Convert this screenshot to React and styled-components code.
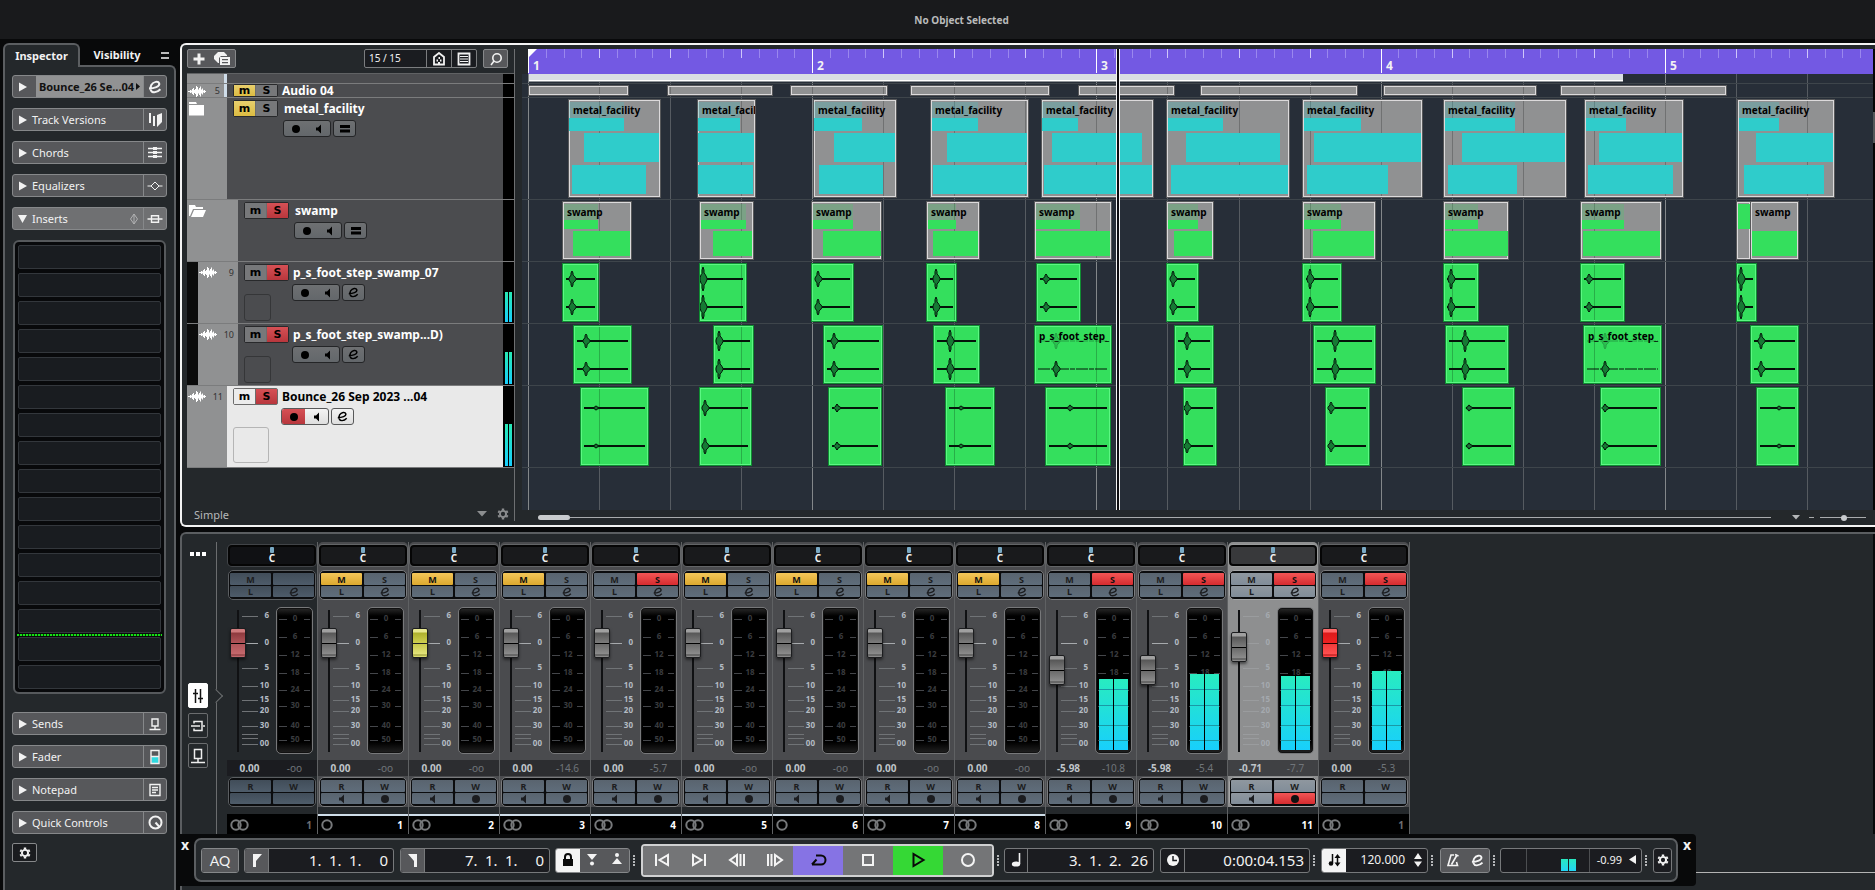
import React from "react";
import styled, { createGlobalStyle, css } from "styled-components";

const c = {
  panel: "#24282b",
  line: "#5b5e61",
  track: "#4b4c4f",
  gutter: "#909192",
  slate: "#272e38",
  cyan: "#2fcccb",
  green: "#34df5d",
  purple: "#7359e3",
  blue: "#cfdde9",
};

const Global = createGlobalStyle`
  * { box-sizing: border-box; }
  body { margin: 0; background: #08090a; overflow: hidden; }
  body, button, input { font-family: "Noto Sans", "Open Sans", sans-serif; font-size: 11px; }
  button { padding: 0; margin: 0; border: 0; color: inherit; background: none; }
  svg { display: block; flex: none; }
`;

/* ---------- icons ---------- */

const Svg = ({ w = 16, h = 16, children, ...rest }) => (
  <svg width={w} height={h} viewBox={`0 0 ${w} ${h}`} fill="none" stroke="currentColor" aria-hidden="true" {...rest}>
    {children}
  </svg>
);

const EditIcon = ({ size = 14, weight = 2 }) => (
  <svg width={size} height={size} viewBox="0 0 14 14" fill="none" stroke="currentColor" strokeWidth={weight} aria-hidden="true">
    <path d="M1 8.5C6 8.5 12.2 6.5 11.2 3.4C10.4 1 5.5 1.2 3.3 5C1.4 8.6 2.8 12.4 6.4 12.3C8.8 12.2 10.8 11 12.4 9.3" />
  </svg>
);
const VersionsIcon = () => (
  <Svg fill="currentColor" stroke="none">
    <path d="M2 1h2v10H2zM6 4h2v10H6zM10 3l5-2v9l-5 5z" />
  </Svg>
);
const ChordsIcon = () => (
  <Svg strokeWidth="1.6">
    <path d="M1 3.5h14M1 7.5h14M1 11.5h14" />
    <path d="M8 2v3M8 6v3M8 10v3" strokeWidth="4" />
  </Svg>
);
const EqIcon = () => (
  <Svg>
    <path d="M0.500 8h3.500M12 8h3.500M8 4l4 4l-4 4l-4-4z" />
  </Svg>
);
const InsertIcon = () => (
  <Svg strokeWidth="1.400">
    <path d="M0.500 8h15M4.500 4.700h7v6.600h-7z" />
  </Svg>
);
const BypassIcon = () => (
  <Svg w={10} h={12} opacity="0.500">
    <path d="M5 1l3.500 5L5 11L1.500 6zM5 1v10" />
  </Svg>
);
const SendIcon = () => (
  <Svg strokeWidth="1.400">
    <path d="M2.500 13.500h11M8 13v-3M5 3h6v7H5z" />
  </Svg>
);
const FaderIcon = () => (
  <Svg>
    <path d="M4.500 8h7v6h-7z" fill="#2fd9e0" stroke="none" />
    <path d="M4 1.500h8v13H4zM4 7.500h8" strokeWidth="1.400" />
  </Svg>
);
const NoteIcon = () => (
  <Svg strokeWidth="1.400">
    <path d="M3 2.500h10v11H3zM5 5.500h6M5 8h6M5 10.500h4" />
  </Svg>
);
const KnobIcon = () => (
  <Svg strokeWidth="2">
    <circle cx="8.500" cy="7.500" r="6" />
    <path d="M8.500 7.500l4 4.500" />
  </Svg>
);
const GearIcon = ({ size = 14 }) => (
  <svg width={size} height={size} viewBox="0 0 14 14" fill="none" stroke="currentColor" aria-hidden="true">
    <circle cx="7" cy="7" r="3.600" strokeWidth="2.200" />
    <path d="M7 0.500v2M7 11.500v2M1.400 3.800l1.700 1M10.900 9.200l1.700 1M1.400 10.200l1.700-1M10.900 4.800l1.700-1" strokeWidth="2.800" />
  </svg>
);
const Tri = ({ open }) => (
  <Svg w={10} h={10} fill="currentColor" stroke="none">
    <path d={open ? "M0 1h9L4.500 9z" : "M1 0.500v9L9 5z"} />
  </Svg>
);
const WAVE_BARS = [1, 1, 3, 2, 5, 7, 3, 5, 11, 9, 4, 7, 10, 4, 6, 2, 3, 1];
const WaveIcon = () => (
  <Svg w={18} h={13}>
    <path d={WAVE_BARS.map((b, i) => `M${i + 0.5} ${6.5 - b / 2}v${b}`).join("")} />
    <path d="M1 6.500h16" />
  </Svg>
);
const FolderIcon = ({ open }) => (
  <Svg w={18} h={14} fill="currentColor" stroke="none">
    {open ? (
      <path d="M1 1h6l1 2h7v2H5L2 12H1zM6 6h12l-3 7H3z" />
    ) : (
      <path d="M1 0h7l1 2H1zM1 3h15v10.500H1z" />
    )}
  </Svg>
);
const SpeakerIcon = () => (
  <Svg w={8} h={10} fill="currentColor" stroke="none">
    <path d="M1 3.500h2l3-3v9l-3-3H1z" />
  </Svg>
);
const DotIcon = () => (
  <Svg w={10} h={10} fill="currentColor" stroke="none">
    <circle cx="5" cy="5" r="4" />
  </Svg>
);
const LanesIcon = () => (
  <Svg w={10} h={8} strokeWidth="3">
    <path d="M0 1.500h10M0 6h10" />
  </Svg>
);

/* ---------- shell ---------- */

const Page = styled.div`
  height: 100vh;
  display: flex;
  flex-direction: column;
  color: #f2f2f2;
`;
const InfoLine = styled.header`
  flex: none;
  height: 39px;
  padding-left: 48px;
  background: #191a1c;
  color: #b9babb;
  display: flex;
  align-items: center;
  justify-content: center;
  font-weight: bold;
  font-size: 10px;
`;
const Main = styled.div`
  flex: 1;
  min-height: 0;
  display: flex;
  gap: 4px;
  padding: 4px 0 0 3px;
`;
const Center = styled.main`
  flex: 1;
  min-width: 0;
  display: flex;
  flex-direction: column;
  gap: 5px;
`;

/* ---------- inspector ---------- */

const Inspector = styled.aside`
  flex: none;
  width: 173px;
  display: flex;
  flex-direction: column;
`;
const TabRow = styled.div`
  display: flex;
  height: 22px;
  font-weight: bold;
`;
const Tab = styled.button`
  width: ${(p) => (p.$active ? 77 : 74)}px;
  height: 24px;
  font-weight: bold;
  line-height: 20px;
  position: relative;
  ${(p) =>
    p.$active &&
    css`
      background: ${c.panel};
      border: 2px solid ${c.line};
      border-bottom: 0;
      border-radius: 6px 6px 0 0;
    `}
`;
const TabMenu = styled.button`
  width: 8px;
  height: 7px;
  margin: 9px 0 0 7px;
  border-top: 2px solid #bbb;
  border-bottom: 2px solid #bbb;
`;
const InspectorBody = styled.div`
  flex: 1;
  background: ${c.panel};
  border: 2px solid ${c.line};
  border-bottom: 0;
  border-radius: 0 6px 0 0;
  padding: 8px 7px 0;
  display: flex;
  flex-direction: column;
  gap: 10px;
`;
const SectionRow = styled.div`
  flex: none;
  display: flex;
  height: 23px;
  border: 1px solid #86888a;
  border-radius: 3px;
  background: ${(p) => (p.$open ? "#6f7072" : "#57585b")};
`;
const SectionName = styled.button`
  flex: 1;
  display: flex;
  align-items: center;
  gap: 4px;
  padding-left: 5px;
  padding-right: 4px;
  text-align: left;
  svg:last-child:not(:first-child) { margin-left: auto; }
`;
const SectionIcon = styled.button`
  width: 23px;
  border-left: 1px solid #86888a;
  display: grid;
  place-items: center;
`;
const TrackTitle = styled.div`
  flex: 1;
  margin-left: 8px;
  background: #919293;
  color: #111;
  font-weight: bold;
  font-size: 11px;
  white-space: nowrap;
  display: flex;
  align-items: center;
  justify-content: center;
  gap: 2px;
`;
const ArrowCell = styled.button`
  padding-left: 5px;
  display: grid;
  place-items: center;
`;
const InsertRack = styled.div`
  flex: none;
  margin: 0 1px 8px 1px;
  border: 2px solid #56595c;
  border-radius: 6px;
  background: #08090b;
  padding: 3px;
  display: flex;
  flex-direction: column;
  gap: 4px;
`;
const Slot = styled.button`
  height: 24px;
  border: 1px solid #33373c;
  border-radius: 2px;
  background: #191c20;
  position: relative;
  ${(p) =>
    p.$postLine &&
    css`
      &::after {
        content: "";
        position: absolute;
        left: -2px;
        right: -2px;
        bottom: -4px;
        height: 2px;
        background: repeating-linear-gradient(90deg, #16e016 0 2px, #063806 2px 3px);
      }
    `}
`;
const SmallGear = styled.button`
  width: 25px;
  height: 19px;
  margin-top: -1px;
  border: 1px solid #86888a;
  border-radius: 2px;
  background: #1a1c1f;
  display: grid;
  place-items: center;
`;

const Section = ({ name, icon, open }) => (
  <SectionRow $open={open}>
    <SectionName>
      <Tri open={open} />
      {name}
      {open && <BypassIcon />}
    </SectionName>
    <SectionIcon aria-label={`${name} settings`}>{icon}</SectionIcon>
  </SectionRow>
);

const InspectorPanel = () => (
  <Inspector>
    <TabRow>
      <Tab $active>Inspector</Tab>
      <Tab>Visibility</Tab>
      <TabMenu aria-label="Menu" />
    </TabRow>
    <InspectorBody>
      <SectionRow>
        <ArrowCell aria-label="Expand">
          <Tri />
        </ArrowCell>
        <TrackTitle>
          Bounce_26 Se...04
          <Svg w={4} h={8} fill="currentColor" stroke="none">
            <path d="M0 0v7l4-3.500z" />
          </Svg>
        </TrackTitle>
        <SectionIcon aria-label="Edit channel">
          <EditIcon />
        </SectionIcon>
      </SectionRow>
      <Section name="Track Versions" icon={<VersionsIcon />} />
      <Section name="Chords" icon={<ChordsIcon />} />
      <Section name="Equalizers" icon={<EqIcon />} />
      <Section name="Inserts" icon={<InsertIcon />} open />
      <InsertRack>
        {Array.from({ length: 16 }, (_, i) => (
          <Slot key={i} $postLine={i === 13} aria-label={`Insert ${i + 1}`} />
        ))}
      </InsertRack>
      <Section name="Sends" icon={<SendIcon />} />
      <Section name="Fader" icon={<FaderIcon />} />
      <Section name="Notepad" icon={<NoteIcon />} />
      <Section name="Quick Controls" icon={<KnobIcon />} />
      <SmallGear aria-label="Inspector setup">
        <GearIcon size={12} />
      </SmallGear>
    </InspectorBody>
  </Inspector>
);

/* ---------- track list ---------- */

const Project = styled.section`
  flex: none;
  display: flex;
  border: 2px solid #f4f4f4;
  border-right: 0;
  border-radius: 6px 0 0 6px;
  background: ${c.panel};
  padding-top: 4px;
`;
const TrackPane = styled.div`
  flex: none;
  width: 333px;
  padding-left: 5px;
  border-right: 1px solid #6d6f71;
  margin-bottom: 4px;
  display: flex;
  flex-direction: column;
`;
const Toolbar = styled.div`
  display: flex;
  height: 25px;
  align-items: flex-start;
  border-bottom: 1px solid #606264;
  padding-right: 6px;
`;
const AddGroup = styled.div`
  display: flex;
  align-items: center;
  justify-content: space-around;
  width: 49px;
  height: 19px;
  margin-right: auto;
  border: 1px solid #86888a;
  border-radius: 2px;
  background: #57585b;
`;
const Counter = styled.div`
  display: flex;
  height: 19px;
  margin-right: 6px;
  border: 1px solid #7b7d7f;
  border-radius: 2px;
  background: #1a1c20;
  font-size: 10px;
  > span { width: 61px; padding-left: 4px; line-height: 17px; }
  > button { width: 25px; border-left: 1px solid #7b7d7f; display: grid; place-items: center; }
`;
const SearchButton = styled.button`
  width: 25px;
  height: 19px;
  border: 1px solid #86888a;
  border-radius: 2px;
  background: #57585b;
  display: grid;
  place-items: center;
`;
const TrackRow = styled.div`
  display: flex;
  height: ${(p) => p.$h}px;
  border-bottom: 1px solid #7b7c7d;
`;
const Indent = styled.div`
  width: 11px;
  background: #0b0b0b;
`;
const Gutter = styled.div`
  width: ${(p) => p.$w}px;
  background: ${c.gutter};
  display: flex;
  justify-content: space-between;
  align-items: flex-start;
  padding: ${(p) => (p.$low ? 1 : 4)}px 4px 0 1px;
  font-size: 9px;
  line-height: ${(p) => (p.$low ? 11 : 13)}px;
  color: #333;
  border-right: ${(p) => (p.$stripe ? `3px solid ${c.blue}` : "0")};
  svg { color: #fff; }
`;
const TrackBody = styled.div`
  flex: 1;
  min-width: 0;
  background: ${(p) => (p.$selected ? "#e9e9e9" : c.track)};
  color: ${(p) => (p.$selected ? "#000" : "#fff")};
  padding: ${(p) => (p.$tight ? 0 : 2)}px 0 0 6px;
`;
const TitleLine = styled.div`
  display: flex;
  align-items: center;
  gap: ${(p) => p.$gap}px;
  font-weight: bold;
  font-size: 12px;
  height: ${(p) => (p.$tight ? 13 : 17)}px;
  line-height: ${(p) => (p.$tight ? 13 : 17)}px;
  white-space: nowrap;
`;
const MuteSolo = styled.div`
  display: flex;
  width: 45px;
  height: 100%;
  border: 1px solid ${(p) => (p.$light ? "#6c6c6c" : "#28292b")};
  border-radius: 2px;
`;
const msColor = { m: "linear-gradient(#e8cf6d, #dcbc42)", s: "linear-gradient(#d65055, #b8373d)" };
const MsButton = styled.button`
  flex: 1;
  font-family: "DejaVu Sans", sans-serif;
  font-weight: bold;
  font-size: 11px;
  line-height: 11px;
  color: #000;
  background: ${(p) => (p.$on ? msColor[p.$kind] : p.$light ? "#ececec" : "#77787a")};
  & + & { border-left: 1px solid ${(p) => (p.$light ? "#6c6c6c" : "#28292b")}; }
`;
const ControlLine = styled.div`
  display: flex;
  gap: 2px;
  margin: 3px 0 0 ${(p) => p.$x}px;
`;
const Pill = styled.div`
  display: flex;
  height: 17px;
  border: 1px solid ${(p) => (p.$light ? "#58595a" : "#242527")};
  border-radius: 3px;
  background: ${(p) => (p.$light ? "linear-gradient(#f4f4f4, #dedede)" : "linear-gradient(#6e7072, #63676b)")};
  overflow: hidden;
`;
const PillButton = styled.button`
  width: ${(p) => p.$w || 23}px;
  color: #000;
  display: grid;
  place-items: center;
  background: ${(p) => (p.$armed ? msColor.s : "none")};
`;
const Swatch = styled.div`
  width: ${(p) => p.$size}px;
  height: ${(p) => p.$size}px;
  margin-top: ${(p) => (p.$size > 30 ? 2 : -7)}px;
  border: 1px solid ${(p) => (p.$size > 30 ? "#b5b5b5" : "#353638")};
  border-radius: 3px;
`;
const TrackMeter = styled.div`
  width: 11px;
  background: #000;
  display: flex;
  align-items: flex-end;
  justify-content: center;
  gap: 1px;
  padding-bottom: 1px;
  i {
    width: 3px;
    height: ${(p) => p.$level}px;
    background: linear-gradient(#28e8b4, #18cdfb);
  }
`;
const PresetBar = styled.div`
  margin-top: auto;
  height: 14px;
  display: flex;
  align-items: center;
  gap: 10px;
  padding: 0 5px 0 7px;
  color: #b6b8ba;
  > svg { color: #8c8e90; }
  > svg:first-of-type { margin-left: auto; }
`;

const tracks = [
  { name: "Audio 04", no: 5, h: 14, gutter: 40, m: true, tight: true, nameX: 4, stripe: true },
  { name: "metal_facility", h: 102, gutter: 40, m: true, folder: "closed", nameX: 6 },
  { name: "swamp", h: 62, gutter: 51, s: true, folder: "open", nameX: 6 },
  { name: "p_s_foot_step_swamp_07", no: 9, h: 62, gutter: 40, indent: true, s: true, nameX: 4, level: 30, swatch: 27 },
  { name: "p_s_foot_step_swamp...D)", no: 10, h: 62, gutter: 40, indent: true, s: true, nameX: 4, level: 32, swatch: 27 },
  { name: "Bounce_26 Sep 2023 ...04", no: 11, h: 82, gutter: 40, s: true, selected: true, nameX: 4, level: 42, swatch: 36 },
];

const Track = ({ t }) => (
  <TrackRow $h={t.h}>
    {t.indent && <Indent />}
    <Gutter $w={t.gutter} $stripe={t.stripe} $low={t.tight}>
      {t.folder ? <FolderIcon open={t.folder === "open"} /> : <WaveIcon />}
      {t.no}
    </Gutter>
    <TrackBody $selected={t.selected} $tight={t.tight}>
      <TitleLine $gap={t.nameX} $tight={t.tight}>
        <MuteSolo $light={t.selected}>
          <MsButton $kind="m" $on={t.m} $light={t.selected}>m</MsButton>
          <MsButton $kind="s" $on={t.s} $light={t.selected}>S</MsButton>
        </MuteSolo>
        {t.name}
      </TitleLine>
      {!t.tight && (
        <ControlLine $x={t.folder ? 50 : 48}>
          <Pill $light={t.selected}>
            <PillButton $armed={t.selected} aria-label="Record enable"><DotIcon /></PillButton>
            <PillButton aria-label="Monitor"><SpeakerIcon /></PillButton>
          </Pill>
          <Pill $light={t.selected}>
            <PillButton $w={21} aria-label="Edit">
              {t.folder ? <LanesIcon /> : <EditIcon size={11} weight={1.8} />}
            </PillButton>
          </Pill>
        </ControlLine>
      )}
      {t.swatch && <Swatch $size={t.swatch} />}
    </TrackBody>
    <TrackMeter $level={t.level || 0}><i /><i /></TrackMeter>
  </TrackRow>
);

const TrackList = () => (
  <TrackPane>
    <Toolbar>
      <AddGroup>
        <button aria-label="Add track">
          <Svg w={12} h={12} strokeWidth="3"><path d="M6 0.500v11M0.500 6h11" /></Svg>
        </button>
        <button aria-label="Track presets">
          <Svg w={16} h={13} fill="currentColor" stroke="none">
            <path d="M4 0h6l3 3v1H7L5 6v5H4L0 7V4z" />
            <path d="M6 5h10v8H6zM8 7v1.300h6V7zM8 10v1.300h6V10z" fillRule="evenodd" />
          </Svg>
        </button>
      </AddGroup>
      <Counter>
        <span>15 / 15</span>
        <button aria-label="Visibility agents">
          <Svg w={14} h={14} strokeWidth="1.800">
            <path d="M2 12.500V5l5-4l5 4v7.500z" />
            <path d="M4.500 8.500h1.500M8 8.500h1.500M6.500 6h1.500M6 11h2" />
          </Svg>
        </button>
        <button aria-label="Track list">
          <Svg w={14} h={14} strokeWidth="1.800"><path d="M1.500 1.500h11v11h-11z" /><path d="M3 4.500h8M3 7h8M3 9.500h8" strokeWidth="1.200" /></Svg>
        </button>
      </Counter>
      <SearchButton aria-label="Find tracks">
        <Svg w={14} h={14} strokeWidth="1.600"><circle cx="8" cy="6" r="4.200" /><path d="M5 9l-3 4" /></Svg>
      </SearchButton>
    </Toolbar>
    <TrackRow $h={10}>
      <Gutter $w={40} $stripe />
      <TrackBody />
      <TrackMeter $level={0} />
    </TrackRow>
    {tracks.map((t) => (
      <Track key={t.name} t={t} />
    ))}
    <PresetBar>
      Simple
      <Svg w={10} h={6} fill="currentColor" stroke="none"><path d="M0 0h10L5 5.500z" /></Svg>
      <GearIcon size={12} />
    </PresetBar>
  </TrackPane>
);

/* ---------- arrangement ---------- */

const ORIGIN = 6;
const BEAT = 71.05;
const beatX = (b) => ORIGIN + Math.round(b * BEAT);
const beats = Array.from({ length: 20 }, (_, i) => i);

const Arrange = styled.div`
  flex: 1;
  min-width: 0;
  margin-left: 7px;
  position: relative;
  overflow: hidden;
`;
const Ruler = styled.div`
  height: 25px;
  position: relative;
  margin-left: ${ORIGIN}px;
  background: ${c.purple};
`;
const Tick = styled.i`
  position: absolute;
  top: 0;
  left: ${(p) => p.$x}px;
  width: 1px;
  height: ${(p) => (p.$bar ? 24 : 9)}px;
  background: ${(p) => (p.$bar ? "#ffffff" : p.$beat ? "#cfc6fa" : "#9a87ee")};
`;
const BarNo = styled.span`
  position: absolute;
  top: 9px;
  left: ${(p) => p.$x + 5}px;
  font-weight: bold;
  font-size: 12px;
  line-height: 15px;
`;
const StartFlag = styled.i`
  position: absolute;
  left: 0;
  top: 0;
  border-top: 9px solid #fff;
  border-right: 9px solid transparent;
`;
const Canvas = styled.div`
  position: relative;
  height: 436px;
  background: ${c.slate};
`;
const GridLine = styled.i`
  position: absolute;
  top: 0;
  bottom: 0;
  left: ${(p) => p.$x}px;
  width: 1px;
  background: ${(p) => (p.$bar ? "#83878a" : "#565b61")};
`;
const Lane = styled.div`
  position: relative;
  height: ${(p) => p.$h}px;
  border-bottom: 1px solid #3e454b;
`;
const OverviewBar = styled.div`
  position: absolute;
  left: 7px;
  width: 1094px;
  top: 0;
  height: 8px;
  background: #d9dee3;
  border-bottom: 1px solid #8f9498;
  box-shadow: inset 0 -1px #fff;
`;
const kinds = {
  folder: css`
    background: ${c.gutter};
    border: 1px solid #57585a;
    box-shadow: inset 0 0 0 1px #dcdadb;
  `,
  audio: css`
    background: ${c.green};
    border: 1px solid #0f8c31;
    box-shadow: inset 0 0 0 1px #5cf783;
  `,
};
const ClipBox = styled.div`
  position: absolute;
  top: ${(p) => p.$top}px;
  bottom: 1px;
  left: ${(p) => p.$x}px;
  width: ${(p) => p.$w}px;
  overflow: hidden;
  ${(p) => kinds[p.$kind]}
`;
const ClipShade = styled.i`
  position: absolute;
  top: 1px;
  bottom: 1px;
  left: ${(p) => p.$x}px;
  width: 1px;
  background: rgba(0, 0, 0, 0.22);
`;
const Part = styled.i`
  position: absolute;
  top: ${(p) => p.$y}px;
  height: ${(p) => p.$h}px;
  left: ${(p) => p.$x}px;
  width: ${(p) => p.$w}px;
  background: ${(p) => p.$color};
  opacity: ${(p) => (p.$faded ? 0.22 : 1)};
`;
const ClipName = styled.span`
  position: absolute;
  left: 4px;
  top: 3px;
  color: #000;
  font-weight: bold;
  font-size: 10px;
  line-height: 15px;
  white-space: nowrap;
`;

/* Clip edges and contents are pixels from the lane's left edge plus LANE_X. */
const LANE_X = 522;
const Clip = ({ x0, x1, top = 1, kind, children }) => (
  <ClipBox $x={x0 - LANE_X} $w={x1 - x0} $top={top} $kind={kind}>
    {beats
      .map((b) => beatX(b) + LANE_X)
      .filter((x) => x > x0 + 1 && x < x1 - 2)
      .map((x) => <ClipShade key={x} $x={x - x0 - 1} />)}
    {children}
  </ClipBox>
);

const FolderClip = ({ d, rows, color, name }) => {
  const [x0, x1, ...parts] = d;
  return (
    <Clip x0={x0} x1={x1} kind="folder">
      {rows.map(([y, h, faded], i) => {
        const k = faded ? 0 : i - 1;
        const a = parts[k * 2];
        const b = parts[k * 2 + 1];
        return <Part key={i} $x={a - x0 - 1} $w={b - a} $y={y} $h={h} $faded={faded} $color={color} />;
      })}
      <ClipName>{name}</ClipName>
    </Clip>
  );
};

const BURST = [[-3, 0.1], [-2, 0.35], [-1, 0.45], [-1, 0.75], [0, 1], [1, 0.75], [1, 0.5], [2, 0.4], [3, 0.25], [4, 0.06]];
const Wave = ({ w, x, amp, mids, h, quietTop }) => (
  <svg width={w} height={h} style={{ position: "absolute", left: 0, top: 0 }} aria-hidden="true">
    {mids.map((m, i) => (
      <g key={m} opacity={quietTop && i === 0 ? 0.3 : 1}>
        <path d={`M3 ${m}H${w - 3}`} stroke="#04140a" strokeWidth={quietTop ? 1 : 2} strokeDasharray={quietTop ? "12 1 5 1" : undefined} />
        <path
          d={`M${BURST.map(([dx, k]) => `${x + dx} ${m - k * amp}`).join("L")}L${[...BURST]
            .reverse()
            .map(([dx, k]) => `${x + dx} ${m + k * amp}`)
            .join("L")}z`}
          fill="#167a34"
          stroke="#04140a"
          strokeWidth="1"
        />
      </g>
    ))}
  </svg>
);
const AudioClip = ({ d, mids, h }) => {
  const [x0, x1, sx, amp, name] = d;
  return (
    <Clip x0={x0} x1={x1} kind="audio">
      <Wave w={x1 - x0 - 2} h={h} x={sx - x0 - 1} amp={amp} mids={mids} quietTop={!!name} />
      {name && <ClipName>{name}</ClipName>}
    </Clip>
  );
};

const muted = [[528, 629], [667, 773], [790, 888], [910, 1050], [1078, 1175], [1200, 1358], [1383, 1537], [1560, 1727]];
const metal = [
  [568, 661, 569, 624, 584, 659, 572, 646],
  [697, 756, 698, 740, 698, 754, 698, 753],
  [813, 897, 814, 862, 834, 895, 819, 883],
  [930, 1029, 932, 978, 947, 1027, 933, 1027],
  [1041, 1154, 1042, 1078, 1052, 1142, 1044, 1152],
  [1166, 1290, 1168, 1223, 1186, 1280, 1171, 1288],
  [1302, 1423, 1304, 1361, 1314, 1421, 1307, 1388],
  [1443, 1567, 1445, 1515, 1462, 1565, 1448, 1517],
  [1584, 1684, 1586, 1626, 1599, 1682, 1588, 1673],
  [1737, 1835, 1739, 1779, 1756, 1833, 1744, 1824],
];
const swamp = [
  [562, 632, 564, 598, 573, 630],
  [699, 754, 701, 746, 713, 752],
  [811, 882, 813, 853, 823, 881],
  [926, 980, 928, 956, 933, 978],
  [1034, 1112, 1036, 1080, 1036, 1110],
  [1166, 1214, 1168, 1198, 1174, 1212],
  [1302, 1376, 1304, 1341, 1313, 1374],
  [1443, 1509, 1445, 1478, 1445, 1508],
  [1580, 1662, 1582, 1624, 1583, 1660],
  [1750, 1799, 1752, 1752, 1752, 1797],
];
const steps07 = [
  [562, 599, 572, 8], [699, 747, 703, 12], [811, 854, 818, 8], [926, 957, 936, 10], [1036, 1081, 1046, 5],
  [1166, 1199, 1173, 8], [1302, 1342, 1310, 10], [1443, 1479, 1451, 10], [1580, 1625, 1589, 5], [1736, 1757, 1741, 12],
];
const steps10 = [
  [573, 632, 586, 7], [713, 754, 719, 10], [823, 883, 834, 8], [933, 980, 950, 11], [1034, 1112, 1056, 8, "p_s_foot_step_"],
  [1174, 1214, 1187, 9], [1313, 1376, 1335, 11], [1445, 1509, 1465, 11], [1583, 1662, 1605, 8, "p_s_foot_step_"], [1750, 1799, 1761, 8],
];
const bounce = [
  [580, 649, 596, 2], [699, 752, 705, 8], [828, 882, 837, 4], [945, 995, 961, 2], [1045, 1111, 1070, 3],
  [1183, 1217, 1187, 7], [1325, 1370, 1331, 6], [1462, 1515, 1469, 3], [1600, 1661, 1605, 4], [1756, 1799, 1779, 2],
];
const metalRows = [[2, 16, true], [18, 13], [33, 29], [65, 29]];
const swampRows = [[2, 16, true], [18, 9], [29, 25]];

const ScrollRow = styled.div`
  height: 15px;
  display: flex;
  align-items: center;
  padding: 0 7px 0 16px;
  i { height: 1px; background: #a9abad; }
  > i:nth-child(1) { width: 32px; height: 5px; border-radius: 3px; background: #c9cbcd; }
  > i:nth-child(2) { flex: 1; }
  > svg { margin: 0 9px 0 21px; color: #b5b7b9; }
  > i:nth-child(4) { width: 5px; margin-right: 6px; }
`;
const ZoomSlider = styled.input`
  appearance: none;
  width: 46px;
  height: 8px;
  margin: 0;
  background: linear-gradient(#a9abad, #a9abad) center / 100% 1px no-repeat;
  &::-webkit-slider-thumb {
    appearance: none;
    width: 6px;
    height: 6px;
    border-radius: 3px;
    background: #c9cbcd;
  }
`;
const Cursor = styled.div`
  position: absolute;
  top: 0;
  bottom: 15px;
  left: 594px;
  width: 4px;
  background: #0c0c10;
  border: solid #f4f4f4;
  border-width: 0 1px;
`;
const VScroll = styled.div`
  flex: none;
  width: 2px;
  margin-bottom: 15px;
  background: #050505;
  &::before { content: ""; display: block; margin-top: 63px; height: 31px; background: #55585a; }
`;

const Arrangement = () => (
  <Arrange>
    <Ruler>
      {Array.from({ length: 76 }, (_, i) => (
        <Tick key={i} $x={Math.round((i * BEAT) / 4)} $beat={i % 4 === 0} $bar={i % 16 === 0} />
      ))}
      {[0, 1, 2, 3, 4].map((b) => (
        <BarNo key={b} $x={Math.round(b * 4 * BEAT)}>{b + 1}</BarNo>
      ))}
      <StartFlag />
    </Ruler>
    <Canvas>
      {beats.map((b) => (
        <GridLine key={b} $x={beatX(b)} $bar={b % 4 === 0} />
      ))}
      <Lane $h={10}><OverviewBar /></Lane>
      <Lane $h={14}>
        {muted.map(([a, b]) => <Clip key={a} x0={a} x1={b} kind="folder" />)}
      </Lane>
      <Lane $h={102}>
        {metal.map((d) => <FolderClip key={d[0]} d={d} rows={metalRows} color={c.cyan} name="metal_facility" />)}
      </Lane>
      <Lane $h={62}>
        <Clip x0={1736} x1={1751} kind="folder">
          <Part $x={1} $w={12} $y={2} $h={25} $color={c.green} />
        </Clip>
        {swamp.map((d) => <FolderClip key={d[0]} d={d} rows={swampRows} color={c.green} name="swamp" />)}
      </Lane>
      <Lane $h={62}>
        {steps07.map((d) => <AudioClip key={d[0]} d={d} h={58} mids={[15, 43]} />)}
      </Lane>
      <Lane $h={62}>
        {steps10.map((d) => <AudioClip key={d[0]} d={d} h={58} mids={[15, 43]} />)}
      </Lane>
      <Lane $h={82}>
        {bounce.map((d) => <AudioClip key={d[0]} d={d} h={78} mids={[20, 58]} />)}
      </Lane>
    </Canvas>
    <ScrollRow>
      <i />
      <i />
      <Svg w={8} h={5} fill="currentColor" stroke="none"><path d="M0 0h8L4 4.500z" /></Svg>
      <i />
      <ZoomSlider type="range" aria-label="Horizontal zoom" min="0" max="40" defaultValue="21" />
    </ScrollRow>
    <Cursor />
  </Arrange>
);

/* ---------- mixer ---------- */

const Mixer = styled.section`
  flex: 1;
  min-height: 0;
  display: flex;
  flex-direction: column;
  border: 2px solid ${c.line};
  border-right: 0;
  border-bottom: 0;
  border-radius: 6px 0 0 0;
  background: ${c.panel};
  overflow: hidden;
`;
const MixerRow = styled.div`
  flex: none;
  display: flex;
  padding-top: 8px;
  border-right: 2px solid #08090a;
`;
const MixerScroll = styled.div`
  flex: none;
  height: 1px;
  margin-top: 38px;
  background: #b4b4b4;
`;
const Rail = styled.div`
  flex: none;
  width: 35px;
  border-right: 1px solid #6b6d6f;
  display: flex;
  flex-direction: column;
  gap: 5px;
  padding: 10px 0 0 6px;
  position: relative;
  &::after {
    content: "";
    position: absolute;
    right: -5px;
    top: 149px;
    width: 9px;
    height: 9px;
    border: solid #6b6d6f;
    border-width: 1px 1px 0 0;
    background: ${c.panel};
    transform: rotate(45deg);
  }
`;
const Dots = styled.button`
  width: 20px;
  height: 4px;
  margin-bottom: 122px;
  display: flex;
  gap: 2px;
  justify-content: center;
  i { width: 4px; height: 4px; background: #fff; }
`;
const RailButton = styled.button`
  width: 20px;
  height: 25px;
  border: 1px solid ${(p) => (p.$on ? "#fff" : "#6b6d6f")};
  border-radius: 2px;
  background: ${(p) => (p.$on ? "#fff" : "none")};
  color: ${(p) => (p.$on ? "#111" : "#eee")};
  display: grid;
  place-items: center;
`;
const Channels = styled.div`
  display: flex;
  margin-left: 10px;
`;
const tone = {
  dim: { body: c.panel, value: "#1b1c20", edge: "#5b5e61", btn: "linear-gradient(#414d59, #4e5c6a)", pan: "#101114" },
  normal: { body: "#4a4b4e", value: "#2c2d30", edge: "#7a7b7d", btn: "linear-gradient(#59646f, #5f6d7b)", pan: "#191a1c" },
  selected: { body: "#8e8f90", value: "#404144", edge: "#a5a6a7", btn: "linear-gradient(#8f979f, #818d99)", pan: "#38393b" },
};
const Channel = styled.div`
  width: 91px;
  display: flex;
  flex-direction: column;
  border-right: 1px solid #5f6163;
`;
const ChannelBody = styled.div`
  background: ${(p) => tone[p.$tone].body};
  border-radius: 5px 5px 0 0;
  padding: 3px 1px 0;
`;
const Pan = styled.button`
  width: 100%;
  height: 21px;
  border: 2px solid #050505;
  border-radius: 4px;
  box-shadow: 0 0 0 1px ${(p) => tone[p.$tone].edge}88;
  background: ${(p) => tone[p.$tone].pan};
  color: #f0f0f0;
  font-weight: bold;
  font-size: 10px;
  line-height: 11px;
  display: flex;
  flex-direction: column;
  align-items: center;
  i { flex: none; width: 4px; height: 6px; border-radius: 1px; background: #79a9c4; }
`;
const Keys = styled.div`
  height: 30px;
  margin: ${(p) => (p.$first ? "4px 0 7px" : "1px 0 0")};
  border: 1px solid ${(p) => tone[p.$tone].edge};
  border-radius: 5px;
  background: #0b0c0e;
  padding: 2px 1px;
  display: grid;
  grid-template-columns: 1fr 1fr;
  grid-template-rows: 12px 11px;
  gap: 1px 2px;
`;
const lit = { yellow: "linear-gradient(#f4c659, #dca92f)", red: "linear-gradient(#f25555, #d62c30)" };
const Key = styled.button`
  background: ${(p) => (p.$lit ? lit[p.$lit] : tone[p.$tone].btn)};
  color: ${(p) => (p.$lit ? "#111" : "#1c1d20")};
  font-weight: bold;
  font-size: 9px;
  line-height: 11px;
  border-radius: 1px;
  display: grid;
  place-items: center;
`;
const FaderArea = styled.div`
  display: flex;
  height: 153px;
  padding-left: 2px;
  > svg { margin-left: -4px; }
`;
const FaderSlot = styled.label`
  position: relative;
  z-index: 1;
  width: 16px;
  height: 142px;
  margin-top: 3px;
  background: linear-gradient(#101113, #101113) 7px 0 / 2px 100% no-repeat;
`;
const cap = {
  gray: "linear-gradient(#a0a0a0 0 3px, #575757 4px, #7c7c7c 14px, #000 14px 15px, #6a6a6a 15px, #8c8c8c 25px, #444 26px, #8a8a8a 27px)",
  yellow: "linear-gradient(#e8e890 0 3px, #aeb02c 4px, #cfd050 14px, #222 14px 15px, #c8c84a 15px, #e3e37a 25px, #8f9030 26px, #dcdc70 27px)",
  dimred: "linear-gradient(#cf7b7d 0 3px, #8e3a3e 4px, #b05459 14px, #000 14px 15px, #b0555a 15px, #c4686c 25px, #7c3236 26px, #c0686c 27px)",
  red: "linear-gradient(#ff6a6a 0 3px, #dd1a1a 4px, #e22 14px, #200 14px 15px, #f03a3a 15px, #ff5050 25px, #a11 26px, #ff4a4a 27px)",
};
const FaderInput = styled.input`
  appearance: none;
  writing-mode: vertical-lr;
  direction: rtl;
  display: block;
  width: 16px;
  height: 142px;
  margin: 0;
  background: none;
  &::-webkit-slider-thumb {
    appearance: none;
    width: 16px;
    height: 30px;
    border: 1px solid #1c1d1f;
    border-radius: 2px;
    background: ${(p) => cap[p.$cap]};
    box-shadow: 0 2px 3px rgba(0, 0, 0, 0.5);
  }
`;
const MeterWell = styled.div`
  width: 37px;
  height: 147px;
  margin-left: 6px;
  border: 1px solid #77787a;
  border-radius: 5px;
  background: linear-gradient(#2a2a2a, #000 8px, #000 134px, #222);
  box-shadow: inset 0 0 0 1px #111;
  position: relative;
`;
const MeterFill = styled.div`
  position: absolute;
  left: 3px;
  right: 3px;
  bottom: 3px;
  height: ${(p) => p.$level}px;
  background:
    linear-gradient(#000, #000) center / 1px 100% no-repeat,
    linear-gradient(#1a99a5, #1a99a5) 0 calc(100% - 9px) / 100% 1px no-repeat,
    linear-gradient(#1a99a5, #1a99a5) 0 calc(100% - 24px) / 100% 1px no-repeat,
    linear-gradient(#1a99a5, #1a99a5) 0 calc(100% - 44px) / 100% 1px no-repeat,
    linear-gradient(#1a99a5, #1a99a5) 0 calc(100% - 60px) / 100% 1px no-repeat,
    linear-gradient(#28ecc0, #18cffc);
`;
const Values = styled.div`
  height: 16px;
  margin: 0 -1px;
  background: ${(p) => tone[p.$tone].value};
  display: grid;
  grid-template-columns: 1fr 1fr;
  text-align: center;
  font-size: 10px;
  line-height: 16px;
  color: #70757a;
  b { color: #bfc4c9; }
`;
const ChannelFoot = styled.div`
  margin-top: 7px;
  height: 20px;
  background: #000;
  border-top: 2px solid ${(p) => (p.$marked ? c.blue : "#000")};
  display: flex;
  justify-content: space-between;
  align-items: center;
  padding: 0 5px 0 3px;
  font-size: 10px;
  font-weight: bold;
  color: ${(p) => (p.$grey ? "#6d6e70" : "#fff")};
  svg { color: #77797b; }
`;

const faderScale = [[9, "6", 8], [36, "0", 35], [61, "5", 60], [79, "10", 78], [93, "15", 92], [104, "20", 103], [119, "30", 118], [127], [131], [137, "00", 136]];
const meterScale = [[12, "0", 11], [30, "6", 29], [48, "12", 47], [66, "18", 65], [83, "24", 82], [99, "30", 98], [119, "40", 118], [133, "50", 132]];
const scaleText = { fontFamily: "Noto Sans, sans-serif", fontSize: 8, fontWeight: 700 };

const FaderScale = ({ sel }) => (
  <svg width="28" height="147" aria-hidden="true" opacity={sel ? 0.6 : 1}>
    {faderScale.map(([y, t, ty]) => (
      <g key={y}>
        <path d={`M0 ${y + 0.5}H16`} stroke={sel ? "#a3a5a8" : t === "0" ? "#a7aaad" : "#707376"} />
        {t && <text x="27" y={ty + 3} textAnchor="end" fill="#b4bbc3" {...scaleText}>{t}</text>}
      </g>
    ))}
  </svg>
);
const MeterScale = ({ w = 35 }) => (
  <svg width={w} height="145" aria-hidden="true">
    {meterScale.map(([y, t, ty]) => (
      <g key={y}>
        <path d={`M2 ${y - 0.5}h8M27 ${y - 0.5}h6`} stroke="#44464a" />
        <text x="18" y={ty + 2} textAnchor="middle" fill="#3a3c3f" {...scaleText}>{t}</text>
      </g>
    ))}
  </svg>
);
const StereoIcon = ({ mono }) => (
  <Svg w={20} h={12} strokeWidth="2">
    <circle cx="6" cy="6" r="4.700" />
    {!mono && <circle cx="13" cy="6" r="4.700" />}
  </Svg>
);

const channels = [
  { no: 1, tone: "dim", cap: "dimred", pos: 94, gain: "0.00", peak: "-oo", bus: true, input: true },
  { no: 1, m: true, cap: "gray", pos: 94, gain: "0.00", peak: "-oo", mono: true, marked: true },
  { no: 2, m: true, cap: "yellow", pos: 94, gain: "0.00", peak: "-oo", marked: true },
  { no: 3, m: true, cap: "gray", pos: 94, gain: "0.00", peak: "-14.6", marked: true },
  { no: 4, s: true, cap: "gray", pos: 94, gain: "0.00", peak: "-5.7", marked: true },
  { no: 5, m: true, cap: "gray", pos: 94, gain: "0.00", peak: "-oo", marked: true },
  { no: 6, m: true, cap: "gray", pos: 94, gain: "0.00", peak: "-oo", mono: true, marked: true },
  { no: 7, m: true, cap: "gray", pos: 94, gain: "0.00", peak: "-oo", marked: true },
  { no: 8, m: true, cap: "gray", pos: 94, gain: "0.00", peak: "-oo", marked: true },
  { no: 9, s: true, cap: "gray", pos: 67, gain: "-5.98", peak: "-10.8", level: 71 },
  { no: 10, s: true, cap: "gray", pos: 67, gain: "-5.98", peak: "-5.4", level: 76 },
  { no: 11, s: true, tone: "selected", cap: "gray", pos: 90, gain: "-0.71", peak: "-7.7", level: 74, armed: true },
  { no: 1, s: true, cap: "red", pos: 94, gain: "0.00", peak: "-5.3", level: 79, bus: true },
];

const ChannelStrip = ({ ch }) => {
  const t = ch.tone || "normal";
  return (
    <Channel>
      <ChannelBody $tone={t}>
        <Pan $tone={t}><i />C</Pan>
        <Keys $tone={t} $first>
          <Key $tone={t} $lit={ch.m && "yellow"}>M</Key>
          <Key $tone={t} $lit={ch.s && "red"}>{ch.input ? "" : "S"}</Key>
          <Key $tone={t}>L</Key>
          <Key $tone={t} aria-label="Edit"><EditIcon size={10} weight={2} /></Key>
        </Keys>
        <FaderArea>
          <FaderSlot>
            <FaderInput type="range" aria-label="Volume" min="0" max="112" defaultValue={ch.pos} $cap={ch.cap} />
          </FaderSlot>
          <FaderScale sel={t === "selected"} />
          <MeterWell>
            <MeterScale />
            {ch.level && <MeterFill $level={ch.level} />}
          </MeterWell>
        </FaderArea>
        <Values $tone={t}><b>{ch.gain}</b><span>{ch.peak}</span></Values>
        <Keys $tone={t}>
          <Key $tone={t}>R</Key>
          <Key $tone={t}>W</Key>
          <Key $tone={t} aria-label="Monitor">{!ch.bus && <SpeakerIcon />}</Key>
          <Key $tone={t} $lit={ch.armed && "red"} aria-label="Record">{!ch.bus && <DotIcon />}</Key>
        </Keys>
      </ChannelBody>
      <ChannelFoot $marked={ch.marked} $grey={ch.bus}><StereoIcon mono={ch.mono} />{ch.no}</ChannelFoot>
    </Channel>
  );
};

const MixerPanel = () => (
  <Mixer>
    <MixerRow>
      <Rail>
        <Dots aria-label="Racks"><i /><i /><i /></Dots>
        <RailButton $on aria-label="Faders">
          <Svg w={12} h={14} strokeWidth="1.500"><path d="M3.500 0v14M8.500 0v14M1 4.500h5M6 9.500h5" /></Svg>
        </RailButton>
        <RailButton aria-label="Inserts">
          <Svg w={14} h={14} strokeWidth="1.500"><path d="M0 7h9M3 4.500V2.500h8v9H3V9.500M12 7h2" /></Svg>
        </RailButton>
        <RailButton aria-label="Sends">
          <Svg w={14} h={16} strokeWidth="1.500"><path d="M0 14.500h14M7 14v-3M3.500 1.500h7v9h-7z" /></Svg>
        </RailButton>
      </Rail>
      <Channels>
        {channels.map((ch, i) => <ChannelStrip key={i} ch={ch} />)}
      </Channels>
    </MixerRow>
    <MixerScroll />
  </Mixer>
);

/* ---------- transport ---------- */

const TransportShell = styled.div`
  position: absolute;
  left: 176px;
  bottom: 4px;
  display: flex;
  gap: 5px;
  padding: 4px 5px 4px 5px;
  background: #08090a;
  border-radius: 4px;
`;
const CloseX = styled.button`
  width: 8px;
  height: 12px;
  font-weight: bold;
  font-size: 14px;
  line-height: 9px;
`;
const TransportBar = styled.div`
  display: flex;
  align-items: center;
  height: 44px;
  padding: 0 4px 0 5px;
  border: 2px solid ${c.line};
  border-radius: 7px;
  background: ${c.panel};
`;
const Field = styled.div`
  display: flex;
  align-items: stretch;
  width: ${(p) => p.$w}px;
  height: 25px;
  margin-right: ${(p) => p.$gap || 0}px;
  border: 1px solid ${(p) => (p.$plain ? "#86888a" : "#77797b")};
  border-radius: 3px;
  background: ${(p) => (p.$plain ? "#57585b" : "#1b1c20")};
  overflow: hidden;
`;
const FieldIcon = styled.button`
  flex: ${(p) => (p.$w ? "none" : 1)};
  width: ${(p) => p.$w}px;
  display: grid;
  place-items: center;
  background: ${(p) => (p.$white ? "#f4f4f4" : p.$flat ? "none" : "#57585b")};
  color: ${(p) => (p.$white ? "#0b0b0b" : "#f4f4f4")};
  border-right: ${(p) => (p.$split ? "1px solid #77797b" : "0")};
  font-family: Lato, sans-serif;
  font-size: 14px;
`;
const Position = styled.output`
  flex: 1;
  display: flex;
  justify-content: flex-end;
  align-items: center;
  gap: ${(p) => p.$gap || 0}px;
  padding-right: 5px;
  font-size: ${(p) => p.$size || 15}px;
  line-height: 20px;
  span { width: 20px; text-align: left; }
  span:last-child:not(:only-child) { width: 19px; text-align: right; }
`;
const Grip = styled.i`
  width: 2px;
  height: 11px;
  margin: 0 ${(p) => p.$r || 7}px 0 3px;
  background: repeating-linear-gradient(#b5b7b9 0 2px, transparent 2px 3px);
`;
const Deck = styled.div`
  display: flex;
  height: 33px;
  border: 2px solid #d0d1d2;
  border-radius: 4px;
  overflow: hidden;
`;
const DeckButton = styled.button`
  width: ${(p) => p.$w}px;
  background: ${(p) => p.$bg || "#747577"};
  color: ${(p) => (p.$bg ? "#0a0a0a" : "#f4f4f4")};
  display: grid;
  place-items: center;
`;
const LevelCell = styled.div`
  width: ${(p) => p.$w}px;
  border-right: 1px solid #4c4e51;
  display: flex;
  align-items: flex-end;
  justify-content: flex-end;
  gap: 1px;
  padding: 0 13px 1px 0;
  i { width: 7px; height: 12px; background: linear-gradient(#28e8c0, #22d4f5); }
`;

const Spinner = () => (
  <Svg w={8} h={14} fill="currentColor" stroke="none">
    <path d="M0 6L4 0l4 6zM0 8.500h8L4 14z" />
  </Svg>
);
const DeckIcon = ({ d, fill }) => (
  <Svg w={18} h={18} strokeWidth="2"><path d={d} fill={fill || "none"} /></Svg>
);

const Transport = () => (
  <TransportShell>
    <CloseX aria-label="Close">x</CloseX>
    <TransportBar>
      <Field $w={38} $gap={5} $plain><FieldIcon>AQ</FieldIcon></Field>
      <Field $w={150} $gap={6}>
        <FieldIcon $w={24} $split aria-label="Left locator">
          <Svg w={10} h={14} fill="currentColor" stroke="none"><path d="M1 1h9L4 8v6H1z" /></Svg>
        </FieldIcon>
        <Position><span>1.</span><span>1.</span><span>1.</span><span>0</span></Position>
      </Field>
      <Field $w={150} $gap={5}>
        <FieldIcon $w={24} $split aria-label="Right locator">
          <Svg w={10} h={14} fill="currentColor" stroke="none"><path d="M0 1h9v13H6V8z" /></Svg>
        </FieldIcon>
        <Position><span>7.</span><span>1.</span><span>1.</span><span>0</span></Position>
      </Field>
      <Field $w={75} $plain>
        <FieldIcon $w={24} $white aria-label="Lock punch points">
          <Svg w={12} h={14} strokeWidth="2"><path d="M3 7V4a3 3 0 0 1 6 0v3" /><path d="M1 6h10v7H1z" fill="currentColor" stroke="none" /></Svg>
        </FieldIcon>
        <FieldIcon aria-label="Punch in">
          <Svg w={10} h={14} fill="currentColor" stroke="none"><path d="M0 1h10L5 7z" /><circle cx="5" cy="10.500" r="2" /></Svg>
        </FieldIcon>
        <FieldIcon aria-label="Punch out">
          <Svg w={10} h={14} fill="currentColor" stroke="none"><path d="M0 11h10L5 5z" /><circle cx="5" cy="2" r="2" /></Svg>
        </FieldIcon>
      </Field>
      <Grip $r={6} />
      <Deck>
        <DeckButton $w={37} aria-label="Previous marker"><DeckIcon d="M3 3v12M15 4v10L6.500 9z" /></DeckButton>
        <DeckButton $w={38} aria-label="Next marker"><DeckIcon d="M15 3v12M3 4v10l8.500-5z" /></DeckButton>
        <DeckButton $w={38} aria-label="Rewind"><DeckIcon d="M12.500 3v12M16 3v12M9 4v10L2 9z" /></DeckButton>
        <DeckButton $w={37} aria-label="Forward"><DeckIcon d="M5.500 3v12M2 3v12M9 4v10l7-5z" /></DeckButton>
        <DeckButton $w={50} $bg="#8673e4" aria-label="Cycle">
          <DeckIcon d="M7 4.500h5a4 4 0 0 1 0 9H3M3 13.500l4.500-5" />
        </DeckButton>
        <DeckButton $w={50} aria-label="Stop"><DeckIcon d="M4 4h10v10H4z" /></DeckButton>
        <DeckButton $w={50} $bg="#35d835" aria-label="Play"><DeckIcon d="M4.500 3v12l10-6z" /></DeckButton>
        <DeckButton $w={49} aria-label="Record">
          <Svg w={18} h={18} strokeWidth="2"><circle cx="9" cy="9" r="6" /></Svg>
        </DeckButton>
      </Deck>
      <Grip $r={5} />
      <Field $w={150} $gap={6}>
        <FieldIcon $w={23} $flat $split aria-label="Bars and beats">
          <Svg w={10} h={14}><path d="M8.500 0v11" strokeWidth="1.600" /><ellipse cx="5" cy="11" rx="4.200" ry="2.600" fill="currentColor" stroke="none" /></Svg>
        </FieldIcon>
        <Position><span>3.</span><span>1.</span><span>2.</span><span>26</span></Position>
      </Field>
      <Field $w={150}>
        <FieldIcon $w={24} $flat $split aria-label="Time">
          <Svg w={12} h={12}><circle cx="6" cy="6" r="6" fill="currentColor" stroke="none" /><path d="M6 2v4.500h4" stroke="#1b1c20" strokeWidth="1.500" /></Svg>
        </FieldIcon>
        <Position>0:00:04.153</Position>
      </Field>
      <Grip $r={6} />
      <Field $w={107}>
        <FieldIcon $w={24} $white aria-label="Tempo track">
          <Svg w={13} h={14}><path d="M4.500 1v9M9.500 4v6" strokeWidth="1.500" /><circle cx="3" cy="10.500" r="2.300" fill="currentColor" stroke="none" /><path d="M6.500 5L9.500 1l3 4zM6.500 9.500h6l-3 4z" fill="currentColor" stroke="none" /></Svg>
        </FieldIcon>
        <Position $size={12} $gap={9}>120.000<Spinner /></Position>
      </Field>
      <Grip />
      <Field $w={50} $plain>
        <FieldIcon aria-label="Metronome">
          <Svg w={14} h={14} strokeWidth="1.600"><path d="M8 2H5L2 12.500h9.500L10.500 9M5.500 11.500L11 2" /><path d="M9 1.500l3.500 1.500" /></Svg>
        </FieldIcon>
        <FieldIcon aria-label="Metronome setup"><EditIcon size={13} /></FieldIcon>
      </Field>
      <Grip $r={5} />
      <Field $w={142}>
        <LevelCell $w={26} />
        <LevelCell $w={63}><i /><i /></LevelCell>
        <Position $size={11} $gap={7}>
          -0.99
          <Svg w={7} h={10} fill="currentColor" stroke="none"><path d="M7 0v9L0 4.500z" /></Svg>
        </Position>
      </Field>
      <Grip $r={6} />
      <Field $w={19}><FieldIcon $flat aria-label="Transport setup"><GearIcon size={12} /></FieldIcon></Field>
    </TransportBar>
    <CloseX aria-label="Close">x</CloseX>
  </TransportShell>
);

export default function App() {
  return (
    <Page>
      <Global />
      <InfoLine>No Object Selected</InfoLine>
      <Main>
        <InspectorPanel />
        <Center>
          <Project>
            <TrackList />
            <Arrangement />
            <VScroll />
          </Project>
          <MixerPanel />
        </Center>
      </Main>
      <Transport />
    </Page>
  );
}
